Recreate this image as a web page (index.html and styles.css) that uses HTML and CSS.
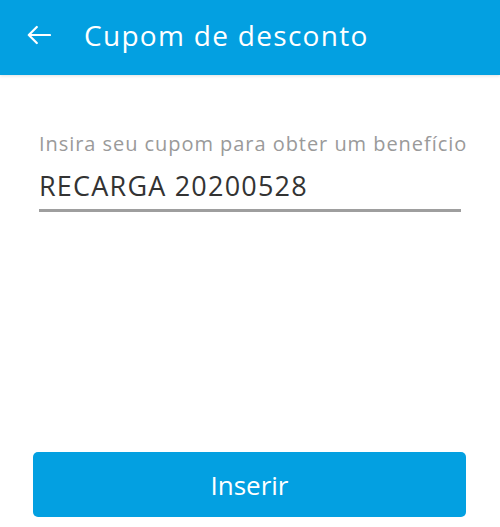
FILE: index.html
```html
<!DOCTYPE html>
<html lang="pt">
<head>
  <meta charset="UTF-8">
  <meta name="viewport" content="width=device-width, initial-scale=1.0">
  <title>Cupom de desconto</title>
  <link rel="stylesheet" href="styles.css">
</head>
<body>
  <header class="app-bar">
    <button class="back" aria-label="Voltar">
      <svg width="24" height="24" viewBox="0 0 24 24">
        <path d="M23 12H1.8M9.8 4L1.8 12l8 8" fill="none" stroke="#fff" stroke-width="2.2" stroke-linecap="round" stroke-linejoin="round"/>
      </svg>
    </button>
    <h1 class="title">Cupom de desconto</h1>
  </header>

  <main class="content">
    <label class="field">
      <span class="field-label">Insira seu cupom para obter um benefício</span>
      <span class="field-value">RECARGA 20200528</span>
    </label>
  </main>

  <footer class="actions">
    <button class="primary">Inserir</button>
  </footer>
</body>
</html>
```

FILE: styles.css
```css
html, body {
  height: 100%;
}

body {
  margin: 0;
  display: flex;
  flex-direction: column;
  background-color: #fff;
  font-family: "Open Sans", "Lato", sans-serif;
}

.app-bar {
  height: 75px;
  box-sizing: border-box;
  padding-bottom: 5px;
  display: flex;
  align-items: center;
  background-color: #03a0e1;
  box-shadow: 0 1px 3px rgba(0, 0, 0, 0.12);
  color: #fff;
}

.back {
  margin-left: 27px;
  padding: 0;
  border: 0;
  background: none;
  display: flex;
}

.title {
  margin: 0 0 0 33px;
  font-size: 28px;
  font-weight: 400;
  letter-spacing: 1.3px;
}

.content {
  flex: 1;
  padding: 55px 39px 0;
}

.field {
  display: flex;
  flex-direction: column;
}

.field-label {
  font-size: 20px;
  color: #9a9a9a;
  letter-spacing: 0.95px;
  white-space: nowrap;
}

.field-value {
  margin-top: 10px;
  padding-bottom: 5px;
  border-bottom: 3px solid #9e9e9e;
  font-size: 27px;
  color: #333;
  letter-spacing: 1.2px;
}

.actions {
  padding: 0 34px 10px 33px;
}

.primary {
  width: 100%;
  height: 65px;
  border: 0;
  border-radius: 5px;
  background-color: #03a0e1;
  color: #fff;
  font-family: inherit;
  font-size: 26px;
}
```
